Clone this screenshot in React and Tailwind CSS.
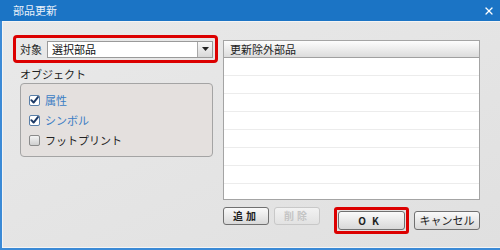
import { X } from "lucide-react";

const jp = { fontFamily: '"Noto Sans CJK JP", "Noto Sans", sans-serif' };

function Check({ checked, label, blue }) {
  return (
    <div className="flex items-center h-[20px]">
      <span
        className={`w-[11px] h-[11px] rounded-[2px] border flex items-center justify-center ${
          checked ? "border-[#5a7fa8] bg-white" : "border-[#8a8a8a] bg-gradient-to-b from-[#f4f4f4] to-[#cfcfcf]"
        }`}
      >
        {checked && (
          <svg width="10" height="10" viewBox="0 0 10 10">
            <path d="M1.5 5.2 L4 7.8 L8.8 1.8" fill="none" stroke="#1d3a66" strokeWidth="2.2" strokeLinecap="round" strokeLinejoin="round" />
          </svg>
        )}
      </span>
      <span className={`ml-[5px] text-[11px] leading-none ${blue ? "text-[#3b7dc4]" : "text-[#222]"}`}>{label}</span>
    </div>
  );
}

function Btn({ children, disabled, className = "" }) {
  return (
    <div
      className={`flex items-center justify-center rounded-[3px] border text-[10px] font-bold leading-none tracking-[3px] ${
        disabled
          ? "border-[#c8c8c8] bg-gradient-to-b from-[#f2f2f2] to-[#e2e2e2] text-[#c4c4c4]"
          : "border-[#707070] bg-gradient-to-b from-[#fafafa] to-[#d9d9d9] text-[#222]"
      } ${className}`}
    >
      {children}
    </div>
  );
}

export default function App() {
  const rows = [0, 1, 2, 3, 4, 5, 6];
  return (
    <div className="w-[500px] h-[250px] flex flex-col overflow-hidden bg-[#d9d9d9]" style={jp}>
      {/* title bar */}
      <div className="h-[21px] shrink-0 bg-[#1b74c5] flex items-center justify-between pl-[13px] pr-[5px]">
        <span className="text-[11px] text-[#e8f0fa] leading-none">部品更新</span>
        <X size={12} strokeWidth={2.5} className="text-white" />
      </div>

      {/* body */}
      <div className="flex-1 flex border-l-2 border-b-2 border-[#3b8ad6]">
        <div className="flex-1 flex border-l border-b border-t border-[#f4f4f4] bg-gradient-to-br from-[#e9e9e9] to-[#e0e0e0] pl-[10px] pt-[13px] pr-[18px]">
          {/* left column */}
          <div className="w-[205px] flex flex-col">
            <div className="h-[28px] border-[3px] border-[#dc0000] rounded-[4px] flex items-center pl-[4px] pr-[2px]">
              <span className="text-[11px] text-[#222] leading-none w-[27px]">対象</span>
              <div className="flex-1 h-[17px] border border-[#9a9a9a] bg-white flex items-center">
                <span className="flex-1 pl-[4px] text-[11px] text-[#111] leading-none">選択部品</span>
                <div className="w-[15px] h-full border-l border-[#a8a8a8] bg-gradient-to-b from-[#f8f8f8] to-[#d8d8d8] flex items-center justify-center">
                  <svg width="7" height="4" viewBox="0 0 7 4">
                    <path d="M0 0 H7 L3.5 4 Z" fill="#222" />
                  </svg>
                </div>
              </div>
            </div>
            <div className="mt-[4px] pl-[7px] text-[11px] text-[#222] leading-[14px]">オブジェクト</div>
            <div className="ml-[7px] mt-[2px] w-[193px] h-[74px] rounded-[4px] border border-[#a4a4a4] bg-[#e4e0de] pl-[8px] pt-[6px] flex flex-col">
              <Check checked label="属性" blue />
              <Check checked label="シンボル" blue />
              <Check label="フットプリント" />
            </div>
          </div>

          {/* right column */}
          <div className="ml-[5px] w-[257px] flex flex-col pt-[5px]">
            <div className="h-[160px] border border-[#a4a4a4] bg-white flex flex-col">
              <div className="h-[17px] shrink-0 border-b border-[#a0a0a0] bg-gradient-to-b from-[#fdfdfd] to-[#dcdcdc] flex items-center pl-[6px]">
                <span className="text-[11px] text-[#222] leading-none">更新除外部品</span>
              </div>
              {rows.map((r) => (
                <div key={r} className="h-[18px] shrink-0 border-b border-[#ececec]" />
              ))}
            </div>
            <div className="flex items-start mt-[7px]">
              <Btn className="w-[46px] h-[18px]">追加</Btn>
              <Btn disabled className="ml-[5px] w-[46px] h-[18px]">削除</Btn>
              <div className="ml-[14px] w-[75px] h-[27px] border-[3px] border-[#dc0000] rounded-[3px] p-px">
                <Btn className="w-full h-full tracking-[6px]">OK</Btn>
              </div>
              <Btn className="ml-[5px] mt-[4px] w-[66px] h-[19px] tracking-normal font-normal text-[11px]">キャンセル</Btn>
            </div>
          </div>
        </div>
      </div>
    </div>
  );
}
